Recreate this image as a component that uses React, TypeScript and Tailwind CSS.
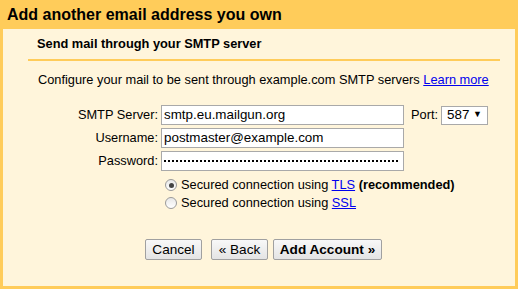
const dots = Array.from({ length: 59 });

export default function App() {
  return (
    <div className="w-[518px] h-[289px] bg-[#ffcc5a] flex flex-col font-['Liberation_Sans',Arial,sans-serif] text-[12.8px] text-black">
      <div className="h-[29px] pl-[7px] flex items-center text-[16px] font-bold leading-none">
        Add another email address you own
      </div>
      <div className="mx-[3px] mb-[3px] flex-1 bg-[#fff5db] flex flex-col">
        <div className="ml-[25px] mr-[15px] h-[32px] border-b-2 border-[#ffcc5a] flex items-center pl-[9px] font-bold">
          Send mail through your SMTP server
        </div>
        <div className="pl-[35px] pt-[11px] leading-[16px]">
          Configure your mail to be sent through example.com SMTP servers{" "}
          <a href="#" className="text-[#0000ee] underline">Learn more</a>
        </div>
        <div className="mt-[17px] flex flex-col gap-[3px]">
          <div className="flex items-center">
            <label className="w-[158px] text-right pr-[3px]">SMTP Server:</label>
            <input className="w-[243px] h-[20px] border border-[#a9a9a9] bg-white px-[2px] text-[13.4px] outline-none" defaultValue="smtp.eu.mailgun.org" />
            <span className="ml-[7px]">Port:</span>
            <div className="ml-[3px] w-[47px] h-[19px] border border-[#a9a9a9] bg-white flex items-center justify-between px-[5px] text-[13.4px]">
              <span>587</span>
              <span className="text-[9px]">▼</span>
            </div>
          </div>
          <div className="flex items-center">
            <label className="w-[158px] text-right pr-[3px]">Username:</label>
            <input className="w-[243px] h-[20px] border border-[#a9a9a9] bg-white px-[2px] text-[13.4px] outline-none" defaultValue="postmaster@example.com" />
          </div>
          <div className="flex items-center">
            <label className="w-[158px] text-right pr-[3px]">Password:</label>
            <div className="w-[243px] h-[20px] border border-[#a9a9a9] bg-white pl-[2px] flex items-center gap-[2px]">
              {dots.map((_, i) => (
                <span key={i} className="w-[2px] h-[2px] bg-black shrink-0" />
              ))}
            </div>
          </div>
        </div>
        <div className="mt-[6px] pl-[162px] flex flex-col gap-[2px]">
          <div className="flex items-center h-[16px]">
            <span className="w-[12px] h-[12px] rounded-full border border-[#9a9a9a] bg-gradient-to-b from-[#e8e8e8] to-[#ffffff] flex items-center justify-center">
              <span className="w-[5px] h-[5px] rounded-full bg-[#444]" />
            </span>
            <span className="ml-[4px]">
              Secured connection using <a href="#" className="text-[#0000ee] underline">TLS</a> <b>(recommended)</b>
            </span>
          </div>
          <div className="flex items-center h-[16px]">
            <span className="w-[12px] h-[12px] rounded-full border border-[#9a9a9a] bg-gradient-to-b from-[#e8e8e8] to-[#ffffff]" />
            <span className="ml-[4px]">
              Secured connection using <a href="#" className="text-[#0000ee] underline">SSL</a>
            </span>
          </div>
        </div>
        <div className="mt-[28px] pl-[142px] flex items-center">
          <button className="w-[57px] h-[21px] border border-[#a0a0a0] rounded-[2px] bg-gradient-to-b from-[#f8f8f8] to-[#e4e4e4] text-[13.6px] leading-none">Cancel</button>
          <button className="ml-[9px] w-[57px] h-[21px] border border-[#a0a0a0] rounded-[2px] bg-gradient-to-b from-[#f8f8f8] to-[#e4e4e4] text-[13.6px] leading-none">« Back</button>
          <button className="ml-[5px] w-[109px] h-[21px] border border-[#a0a0a0] rounded-[2px] bg-gradient-to-b from-[#f8f8f8] to-[#e4e4e4] text-[13.6px] font-bold leading-none">Add Account »</button>
        </div>
      </div>
    </div>
  );
}
